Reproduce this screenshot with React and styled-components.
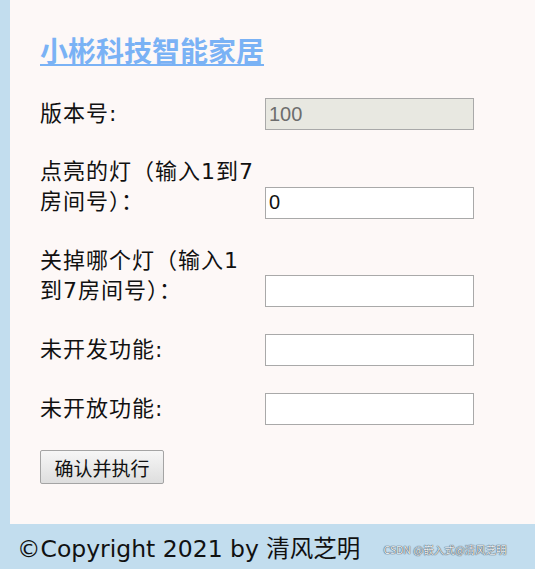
import styled, { createGlobalStyle } from "styled-components";

const GlobalStyle = createGlobalStyle`
  html, body {
    margin: 0;
    padding: 0;
    background-color: #c2ddee;
  }
  body {
    font-family: "DejaVu Sans", "Noto Sans CJK SC", sans-serif;
    color: #111;
  }
`;

const Page = styled.div`
  width: 535px;
  height: 569px;
  display: flex;
  flex-direction: column;
  overflow: hidden;
`;

const Main = styled.main`
  margin-left: 10px;
  height: 524px;
  box-sizing: border-box;
  padding: 32px 0 0 30px;
  background-color: #fdf8f7;
`;

const Title = styled.a`
  display: block;
  margin: 0 0 30px;
  font-family: "Noto Sans CJK SC", sans-serif;
  font-size: 28px;
  font-weight: 700;
  line-height: 36px;
  color: #7ab2f5;
  text-decoration: underline;
  text-underline-offset: 2px;
`;

const Row = styled.div`
  margin-bottom: 27px;
  font-size: 22px;
  line-height: 30px;
`;

const Label = styled.label`
  display: inline-block;
  width: 218px;
  margin-right: 7px;
  vertical-align: baseline;
  letter-spacing: 1px;
  font-family: "DejaVu Sans", "Noto Sans CJK SC", sans-serif;
`;

const Field = styled.input`
  box-sizing: border-box;
  width: 209px;
  height: 32px;
  padding: 0 3px;
  border: 1px solid #a9a9a9;
  border-radius: 0;
  outline: none;
  font-family: "Liberation Sans", Arial, sans-serif;
  font-size: 20px;
  color: #111;
  background-color: #fff;
  vertical-align: baseline;

  &:disabled {
    background-color: #e8e8e1;
    color: #6d6d6d;
  }
`;

const Button = styled.button`
  box-sizing: border-box;
  width: 124px;
  height: 34px;
  margin-top: -2px;
  padding: 0;
  border: 1px solid #a4a4a4;
  border-radius: 2px;
  background: linear-gradient(#f6f6f6, #dedede);
  font-family: "Noto Sans CJK SC", sans-serif;
  font-size: 19px;
  color: #111;
`;

const Footer = styled.footer`
  flex: 1;
  display: flex;
  align-items: center;
  gap: 23px;
  padding-left: 17px;
`;

const Copy = styled.span`
  font-family: "DejaVu Sans", "Noto Sans CJK SC", sans-serif;
  font-size: 23.5px;
  color: #111;
`;

const Mark = styled.span`
  margin-top: 6px;
  font-family: "Noto Sans CJK SC", sans-serif;
  font-size: 10.5px;
  color: #eef2f6;
  text-shadow: 0 0 1px #2f3a44, 0 0 1px #2f3a44;
`;

const rows = [
  { label: "版本号:", value: "100", disabled: true },
  { label: "点亮的灯（输入1到7房间号）：", value: "0" },
  { label: "关掉哪个灯（输入1到7房间号）：", value: "" },
  { label: "未开发功能:", value: "" },
  { label: "未开放功能:", value: "" },
];

export default function App() {
  return (
    <Page>
      <GlobalStyle />
      <Main>
        <Title href="#">小彬科技智能家居</Title>
        {rows.map((r) => (
          <Row key={r.label}>
            <Label>{r.label}</Label>
            <Field defaultValue={r.value} disabled={r.disabled} />
          </Row>
        ))}
        <Button>确认并执行</Button>
      </Main>
      <Footer>
        <Copy>©Copyright 2021 by 清风芝明</Copy>
        <Mark>CSDN @嵌入式@清风芝明</Mark>
      </Footer>
    </Page>
  );
}
